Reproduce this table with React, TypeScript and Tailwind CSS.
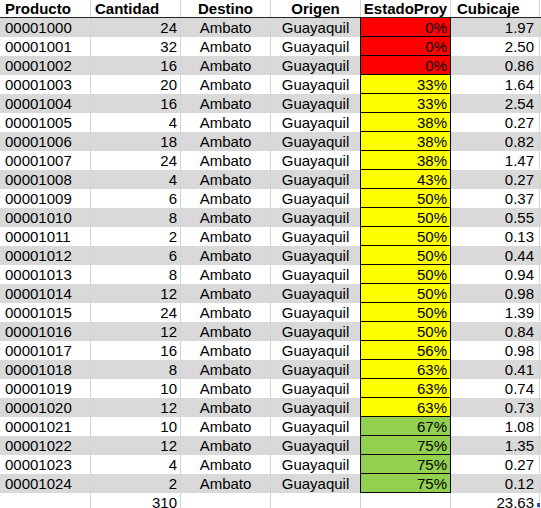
import React from "react";

type Row = { p: string; c: number; e: number; k: string };

const rows: Row[] = [
  { p: "00001000", c: 24, e: 0, k: "1.97" },
  { p: "00001001", c: 32, e: 0, k: "2.50" },
  { p: "00001002", c: 16, e: 0, k: "0.86" },
  { p: "00001003", c: 20, e: 33, k: "1.64" },
  { p: "00001004", c: 16, e: 33, k: "2.54" },
  { p: "00001005", c: 4, e: 38, k: "0.27" },
  { p: "00001006", c: 18, e: 38, k: "0.82" },
  { p: "00001007", c: 24, e: 38, k: "1.47" },
  { p: "00001008", c: 4, e: 43, k: "0.27" },
  { p: "00001009", c: 6, e: 50, k: "0.37" },
  { p: "00001010", c: 8, e: 50, k: "0.55" },
  { p: "00001011", c: 2, e: 50, k: "0.13" },
  { p: "00001012", c: 6, e: 50, k: "0.44" },
  { p: "00001013", c: 8, e: 50, k: "0.94" },
  { p: "00001014", c: 12, e: 50, k: "0.98" },
  { p: "00001015", c: 24, e: 50, k: "1.39" },
  { p: "00001016", c: 12, e: 50, k: "0.84" },
  { p: "00001017", c: 16, e: 56, k: "0.98" },
  { p: "00001018", c: 8, e: 63, k: "0.41" },
  { p: "00001019", c: 10, e: 63, k: "0.74" },
  { p: "00001020", c: 12, e: 63, k: "0.73" },
  { p: "00001021", c: 10, e: 67, k: "1.08" },
  { p: "00001022", c: 12, e: 75, k: "1.35" },
  { p: "00001023", c: 4, e: 75, k: "0.27" },
  { p: "00001024", c: 2, e: 75, k: "0.12" },
];

const estadoBg = (e: number) =>
  e === 0 ? "bg-[#ff0000]" : e < 67 ? "bg-[#ffff00]" : "bg-[#92d050]";

const cell = "h-full flex items-center border-r border-[#d4d4d4] overflow-hidden whitespace-nowrap";

export default function App() {
  return (
    <div
      className="w-[541px] h-[508px] overflow-hidden bg-white text-black relative"
      style={{ fontFamily: '"Liberation Sans", Arial, sans-serif' }}
    >
      <div className="text-[15px] leading-none">
        {/* Header */}
        <div className="grid grid-cols-[91px_90px_90px_90px_90px_89px] h-[18px] border-b border-[#222] font-bold">
          <div className={`${cell} pl-[5px]`}>Producto</div>
          <div className={`${cell} pl-[4px]`}>Cantidad</div>
          <div className={`${cell} justify-center`}>Destino</div>
          <div className={`${cell} justify-center`}>Origen</div>
          <div className={`${cell} justify-center`}>EstadoProy</div>
          <div className={`${cell} pl-[6px]`}>Cubicaje</div>
        </div>
        {rows.map((r, i) => (
          <div
            key={r.p}
            className={`grid grid-cols-[91px_90px_90px_90px_90px_89px] h-[19px] ${
              i % 2 === 0 ? "bg-[#d9d9d9]" : "bg-white"
            }`}
          >
            <div className={`${cell} pl-[5px]`}>{r.p}</div>
            <div className={`${cell} justify-end pr-[3px]`}>{r.c}</div>
            <div className={`${cell} justify-center`}>Ambato</div>
            <div className={`${cell} justify-center`}>Guayaquil</div>
            <div
              className={`h-full flex items-center justify-end pr-[3px] ml-[-1px] w-[91px] border border-t-0 border-black ${estadoBg(
                r.e
              )}`}
            >
              {r.e}%
            </div>
            <div className={`${cell} justify-end pr-[5px]`}>{r.k}</div>
          </div>
        ))}
        <div className="grid grid-cols-[91px_90px_90px_90px_90px_89px] h-[19px] bg-white">
          <div className={cell}></div>
          <div className={`${cell} justify-end pr-[3px]`}>310</div>
          <div className={cell}></div>
          <div className={cell}></div>
          <div className={cell}></div>
          <div className={`${cell} justify-end pr-[5px]`}>23.63</div>
        </div>
      </div>
      <div className="absolute left-[537px] top-[503px] w-[3px] h-[4px] bg-[#2f4fb0]"></div>
    </div>
  );
}
